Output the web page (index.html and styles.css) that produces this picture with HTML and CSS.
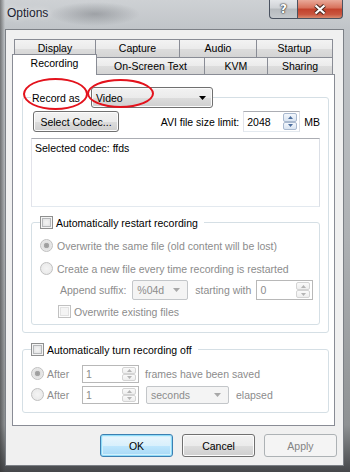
FILE: index.html
```html
<!DOCTYPE html>
<html lang="en">

<head>
    <meta charset="UTF-8">
    <title>Options</title>
    <link rel="stylesheet" href="styles.css">
</head>

<body>
    <div class="window">
        <div class="titlebar">
            <span class="title">Options</span>
            <div class="caption">
                <div class="cap-btn cap-help">?</div>
                <div class="cap-btn cap-close">
                    <svg width="14" height="11" viewBox="0 0 14 11">
                        <path d="M2.5 1.5L11.5 9.5M11.5 1.5L2.5 9.5" stroke="#4a2a22" stroke-width="4.2" fill="none"/>
                        <path d="M2.5 1.5L11.5 9.5M11.5 1.5L2.5 9.5" stroke="#fff" stroke-width="2.2" fill="none"/>
                    </svg>
                </div>
            </div>
        </div>

        <div class="client">
            <div class="tab-row back">
                <div class="tab t-display">Display</div>
                <div class="tab t-capture">Capture</div>
                <div class="tab t-audio">Audio</div>
                <div class="tab t-startup last">Startup</div>
            </div>
            <div class="tab-row front">
                <div class="tab t-recording selected">Recording</div>
                <div class="tab t-osd">On-Screen Text</div>
                <div class="tab t-kvm">KVM</div>
                <div class="tab t-sharing last">Sharing</div>
            </div>

            <div class="panel">
                <fieldset class="group record-group">
                    <legend class="legend-combo">
                        <span class="legend-label">Record as</span>
                        <div class="combo combo-video">
                            <span>Video</span>
                            <svg class="arrow" width="7" height="4" viewBox="0 0 7 4"><path d="M0 0h7L3.5 4z" fill="#000"/></svg>
                        </div>
                    </legend>

                    <div class="codec-row">
                        <button class="btn btn-codec">Select Codec...</button>
                        <div class="size-limit">
                            <span>AVI file size limit:</span>
                            <div class="spin spin-size">
                                <span class="spin-value">2048</span>
                                <div class="spin-btns">
                                    <span class="spin-btn"><svg width="5" height="3" viewBox="0 0 5 3"><path d="M0 3L2.5 0L5 3z" fill="#4c6e9e"/></svg></span>
                                    <span class="spin-btn"><svg width="5" height="3" viewBox="0 0 5 3"><path d="M0 0h5L2.5 3z" fill="#4c6e9e"/></svg></span>
                                </div>
                            </div>
                            <span class="unit">MB</span>
                        </div>
                    </div>

                    <div class="codec-info">Selected codec: ffds</div>

                    <fieldset class="group restart-group">
                        <legend class="legend-check">
                            <span class="check"></span>
                            <span>Automatically restart recording</span>
                        </legend>
                        <div class="opt-row disabled">
                            <span class="radio checked"></span>
                            <span>Overwrite the same file (old content will be lost)</span>
                        </div>
                        <div class="opt-row disabled">
                            <span class="radio"></span>
                            <span>Create a new file every time recording is restarted</span>
                        </div>
                        <div class="suffix-row disabled">
                            <span>Append suffix:</span>
                            <div class="combo combo-off combo-suffix">
                                <span>%04d</span>
                                <svg class="arrow" width="7" height="4" viewBox="0 0 7 4"><path d="M0 0h7L3.5 4z" fill="#a8a8a8"/></svg>
                            </div>
                            <span class="starting">starting with</span>
                            <div class="spin spin-off spin-start">
                                <span class="spin-value">0</span>
                                <div class="spin-btns">
                                    <span class="spin-btn"><svg width="5" height="3" viewBox="0 0 5 3"><path d="M0 3L2.5 0L5 3z" fill="#b4b4b4"/></svg></span>
                                    <span class="spin-btn"><svg width="5" height="3" viewBox="0 0 5 3"><path d="M0 0h5L2.5 3z" fill="#b4b4b4"/></svg></span>
                                </div>
                            </div>
                        </div>
                        <div class="opt-row sub-check disabled">
                            <span class="check check-off"></span>
                            <span>Overwrite existing files</span>
                        </div>
                    </fieldset>
                </fieldset>

                <fieldset class="group stop-group">
                    <legend class="legend-check">
                        <span class="check"></span>
                        <span>Automatically turn recording off</span>
                    </legend>
                    <div class="after-row disabled">
                        <span class="radio checked"></span>
                        <span class="after-label">After</span>
                        <div class="spin spin-off spin-small">
                            <span class="spin-value">1</span>
                            <div class="spin-btns">
                                <span class="spin-btn"><svg width="5" height="3" viewBox="0 0 5 3"><path d="M0 3L2.5 0L5 3z" fill="#b4b4b4"/></svg></span>
                                <span class="spin-btn"><svg width="5" height="3" viewBox="0 0 5 3"><path d="M0 0h5L2.5 3z" fill="#b4b4b4"/></svg></span>
                            </div>
                        </div>
                        <span class="after-text">frames have been saved</span>
                    </div>
                    <div class="after-row disabled">
                        <span class="radio"></span>
                        <span class="after-label">After</span>
                        <div class="spin spin-off spin-small">
                            <span class="spin-value">1</span>
                            <div class="spin-btns">
                                <span class="spin-btn"><svg width="5" height="3" viewBox="0 0 5 3"><path d="M0 3L2.5 0L5 3z" fill="#b4b4b4"/></svg></span>
                                <span class="spin-btn"><svg width="5" height="3" viewBox="0 0 5 3"><path d="M0 0h5L2.5 3z" fill="#b4b4b4"/></svg></span>
                            </div>
                        </div>
                        <div class="combo combo-off combo-unit">
                            <span>seconds</span>
                            <svg class="arrow" width="7" height="4" viewBox="0 0 7 4"><path d="M0 0h7L3.5 4z" fill="#a8a8a8"/></svg>
                        </div>
                        <span class="elapsed">elapsed</span>
                    </div>
                </fieldset>
            </div>

            <div class="dialog-buttons">
                <button class="btn btn-default">OK</button>
                <button class="btn">Cancel</button>
                <button class="btn btn-disabled">Apply</button>
            </div>
        </div>

        <!-- red marks drawn over the screenshot -->
        <div class="mark mark-label"></div>
        <div class="mark mark-combo"></div>
    </div>
</body>

</html>
```

FILE: styles.css
```css
* {
    box-sizing: border-box;
}

body {
    margin: 0;
    font-family: "Liberation Sans", Arial, sans-serif;
    font-size: 10.5px;
    color: #000;
}

.window {
    position: relative;
    width: 350px;
    height: 472px;
    display: flex;
    flex-direction: column;
    overflow: hidden;
    background:
        radial-gradient(ellipse 45px 12px at 95px 14px, rgba(80, 84, 90, 0.35), rgba(80, 84, 90, 0)),
        linear-gradient(90deg, rgba(50, 50, 50, 0.55) 0, rgba(50, 50, 50, 0) 5px),
        linear-gradient(180deg, #ced1d4 0, #c1c5c9 28px, #aeb1b4 50%, #8f9294 90%, #45474a 100%);
}

/* title bar */
.titlebar {
    height: 29px;
    flex-shrink: 0;
    display: flex;
    justify-content: space-between;
    align-items: flex-start;
    padding: 0 7px 0 7px;
}

.title {
    font-size: 12px;
    line-height: 27px;
    color: #1c2230;
    text-shadow: 0 0 6px rgba(255, 255, 255, 0.9);
}

.caption {
    display: flex;
}

.cap-btn {
    height: 19px;
    border: 1px solid #4a5260;
    border-top: none;
    display: flex;
    align-items: center;
    justify-content: center;
}

.cap-help {
    width: 28px;
    border-right: none;
    border-radius: 0 0 0 4px;
    background: linear-gradient(#e4e6e9 0, #cfd2d6 45%, #b6babe 50%, #c4c8cc 100%);
    color: #fff;
    font-family: "DejaVu Sans", sans-serif;
    font-weight: bold;
    font-size: 12px;
    text-shadow: 0 0 1px #333, 0 0 2px #333, 0 0 1px #333;
}

.cap-close {
    width: 46px;
    border-radius: 0 0 4px 0;
    background: linear-gradient(#e9a999 0, #d7705a 45%, #c2412b 50%, #c9553e 80%, #d98a6e 100%);
}

/* client area */
.client {
    flex: 1;
    margin: 0 6px 6px 5px;
    border: 1px solid #7c8086;
    background: #f0f0f0;
    padding: 9px 8px 0 6px;
    display: flex;
    flex-direction: column;
}

.tab-row {
    display: flex;
    flex-shrink: 0;
}

.tab-row.back {
    height: 18px;
    margin-left: 2px;
}

.tab-row.front {
    height: 17px;
}

.tab {
    height: 18px;
    border: 1px solid #898c95;
    border-right: none;
    border-bottom: none;
    background: linear-gradient(#f3f3f3 0, #ebebeb 50%, #dddddd 51%, #d4d4d4 100%);
    text-align: center;
    line-height: 16px;
    white-space: nowrap;
}

.tab-row.front .tab {
    height: 17px;
}

.tab.last {
    border-right: 1px solid #898c95;
}

.t-display { width: 81px; }
.t-capture { width: 84px; }
.t-audio { width: 77px; }
.t-startup { width: 77px; }
.t-osd { width: 107px; border-left: none; }
.t-kvm { width: 63px; }
.t-sharing { width: 66px; }

.tab-row.front .tab.selected {
    position: relative;
    z-index: 2;
    width: 85px;
    height: 21px;
    margin-top: -3px;
    border-right: 1px solid #898c95;
    background: #fff;
    line-height: 17px;
}

.panel {
    height: 352px;
    flex-shrink: 0;
    background: #fff;
    border: 1px solid #898c95;
}

/* group boxes */
.group {
    margin: 0;
    min-width: 0;
    border: 1px solid #d5dfe5;
    border-radius: 3px;
    padding: 3px 8px 7px 8px;
}

.group legend {
    padding: 0;
    display: flex;
    align-items: center;
    white-space: nowrap;
}

.record-group {
    width: 307px;
    margin: 12px 0 0 9px;
}

.legend-label {
    width: 60px;
    padding-left: 1px;
}

.legend-check {
    padding-right: 6px !important;
    height: 13px;
}

.legend-check .check {
    margin-right: 3px;
}

/* combo boxes */
.combo {
    display: flex;
    align-items: center;
    justify-content: space-between;
    border-radius: 3px;
    flex-shrink: 0;
}

.combo-video {
    width: 122px;
    height: 21px;
    border: 1px solid #707070;
    padding: 0 6px 0 4px;
    background: linear-gradient(#f2f2f2 0, #ebebeb 50%, #dddddd 51%, #cfcfcf 100%);
    box-shadow: inset 0 0 0 1px #fbfbfb;
}

.combo-off {
    border: 1px solid #c3c6c9;
    background: #f4f4f4;
    color: #8c8c8c;
    padding: 0 7px 0 4px;
    border-radius: 2px;
}

.combo-suffix {
    width: 56px;
    height: 20px;
    margin-left: 6px;
}

.combo-unit {
    width: 83px;
    height: 18px;
    margin-left: 7px;
}

/* buttons */
.btn {
    font: inherit;
    color: #000;
    height: 23px;
    padding: 0;
    border: 1px solid #707070;
    border-radius: 3px;
    background: linear-gradient(#f2f2f2 0, #ebebeb 50%, #dddddd 51%, #cfcfcf 100%);
    box-shadow: inset 0 0 0 1px #fcfcfc;
}

.btn-codec {
    width: 86px;
    height: 21px;
    margin-left: 2px;
}

.btn-default {
    border-color: #3c7fb1;
    background: linear-gradient(#eaf6fd 0, #d9f0fc 50%, #bee6fd 51%, #a7d9f5 100%);
    box-shadow: inset 0 0 0 1px #8fdcf9, inset 0 0 0 2px #d2f0fc;
}

.btn-disabled {
    border-color: #adb2b5;
    background: #f4f4f4;
    box-shadow: none;
    color: #838383;
}

.codec-row {
    display: flex;
    justify-content: space-between;
    align-items: center;
    height: 21px;
}

.size-limit {
    display: flex;
    align-items: center;
    white-space: nowrap;
}

/* spin edits */
.spin {
    display: flex;
    align-items: stretch;
    justify-content: space-between;
    flex-shrink: 0;
    background: #fff;
    border: 1px solid;
    border-color: #abadb3 #dbdfe6 #e3e9ef #e2e3ea;
}

.spin-value {
    padding-left: 3px;
    display: flex;
    align-items: center;
}

.spin-btns {
    width: 14px;
    margin: 1px 2px 1px 0;
    display: flex;
    flex-direction: column;
}

.spin-btn {
    flex: 1;
    display: flex;
    align-items: center;
    justify-content: center;
    border: 1px solid #a9b9cf;
    border-radius: 2px;
    background: linear-gradient(#f3f7fc, #d9e4f1);
}

.spin-size {
    width: 57px;
    height: 21px;
    margin-left: 4px;
}

.unit {
    margin-left: 4px;
}

.spin-off {
    border: 1px solid #b8b8b8;
    color: #8c8c8c;
}

.spin-off .spin-btn {
    border-color: #d4d4d4;
    background: linear-gradient(#fafafa, #eeeeee);
}

.spin-start {
    width: 57px;
    height: 20px;
    margin-left: 5px;
}

.spin-small {
    width: 57px;
    height: 18px;
}

.codec-info {
    margin-top: 6px;
    height: 69px;
    border: 1px solid;
    border-color: #abadb3 #dbdfe6 #e3e9ef #e2e3ea;
    padding: 3px 3px;
    line-height: 13px;
}

/* restart sub group */
.restart-group {
    margin-top: 9px;
    padding: 5px 8px 1px 8px;
}

.opt-row {
    height: 23px;
    display: flex;
    align-items: center;
    white-space: nowrap;
}

.opt-row .radio {
    margin-right: 4px;
}

.sub-check {
    padding-left: 18px;
}

.sub-check .check {
    margin-right: 3px;
}

.suffix-row {
    height: 20px;
    display: flex;
    align-items: center;
    padding-left: 20px;
    white-space: nowrap;
}

.starting {
    margin-left: 7px;
}

.disabled {
    color: #8c8c8c;
}

/* stop group */
.stop-group {
    width: 307px;
    margin: 10px 0 0 9px;
    padding: 7px 8px 7px 8px;
}

.after-row {
    height: 21px;
    display: flex;
    align-items: center;
    white-space: nowrap;
}

.after-row .radio {
    margin-right: 3px;
}

.after-label {
    width: 35px;
}

.after-text {
    margin-left: 6px;
}

.elapsed {
    margin-left: 7px;
}

/* check boxes and radios */
.check {
    width: 13px;
    height: 13px;
    flex-shrink: 0;
    border: 1px solid #8e8f8f;
    background: #f4f4f4;
    box-shadow: inset 0 0 0 1px #f4f4f4, inset 0 0 0 2px #b6b8ba, inset 0 0 3px 3px #e2e3e4;
}

.check-off {
    border-color: #c1c1c1;
    box-shadow: inset 0 0 0 1px #fcfcfc, inset 0 0 0 2px #e2e2e2;
}

.radio {
    width: 13px;
    height: 13px;
    flex-shrink: 0;
    border-radius: 50%;
    border: 1px solid #c0c0c0;
    background: radial-gradient(circle, #f4f4f4 0, #e6e6e6 100%);
}

.radio.checked {
    background: radial-gradient(circle, #9a9a9a 0, #a8a8a8 2.5px, #e0e0e0 3px, #f2f2f2 100%);
}

/* dialog buttons */
.dialog-buttons {
    display: flex;
    justify-content: flex-end;
    gap: 9px;
    margin: 8px -2px 0 0;
}

.dialog-buttons .btn {
    width: 73px;
}

/* red marks over the dialog */
.mark {
    position: absolute;
    border: 2px solid #e3121c;
    border-radius: 50%;
}

.mark-label {
    left: 23px;
    top: 78px;
    width: 65px;
    height: 32px;
}

.mark-combo {
    left: 87px;
    top: 79px;
    width: 67px;
    height: 29px;
}
```
